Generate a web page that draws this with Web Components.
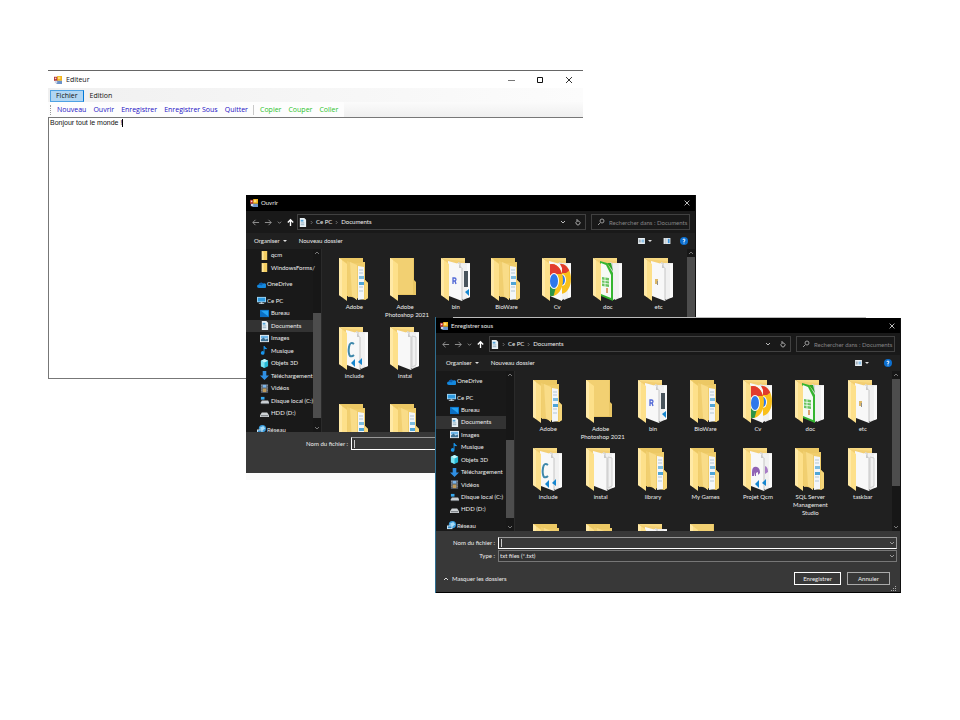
<!DOCTYPE html>
<html lang="fr">
<head>
<meta charset="utf-8">
<title>Editeur</title>
<style>
html, body { margin: 0; height: 100%; background: #fff; }
body { font: 6px/8px Lato, "Open Sans", sans-serif; }
</style>
</head>
<body>
<app-desktop></app-desktop>
<script>
const svg = (box, body, w, h) => `<svg viewBox="0 0 ${box}" width="${w}" height="${h}" aria-hidden="true">${body}</svg>`;
const stroke = (d, c = '#ddd', s = 1) => `<path d="${d}" fill="none" stroke="${c}" stroke-width="${s}"/>`;

const SMALL = {
  app: `<rect x="0" y="1" width="5" height="5" fill="#b02a2a"/><rect x="1" y="2" width="2" height="2" fill="#f3d5cf"/><rect x="4" y="0" width="6" height="6" fill="#f2b41c"/><rect x="5" y="1" width="3" height="3" fill="#ffdf77"/><rect x="3" y="6" width="7" height="4" fill="#6d93c9"/><rect x="1" y="6" width="3" height="3" fill="#cfd8e6"/>`,
  folder: `<path d="M2 0h6v10H2z" fill="#f5cf62"/><path d="M2 0l2 1v9H2z" fill="#ffe69a"/>`,
  cloud: `<path d="M2 9a2 2 0 0 1 0-4 3 3 0 0 1 5-1 2.500 2.500 0 0 1 2 5z" fill="#1487dc"/><path d="M2 5a3 3 0 0 1 5-1L5 6z" fill="#0a5cae"/>`,
  pc: `<rect x="0" y="1" width="10" height="6" fill="#9fd4f2"/><rect x="1" y="2" width="8" height="4" fill="#2e9ae0"/><path d="M4 7h2v1h2v1H2V8h2z" fill="#c7d3da"/>`,
  desk: `<rect x="0" y="1" width="10" height="8" fill="#0b6fc4"/><path d="M1 2h8v6z" fill="#25a3f3"/>`,
  doc: `<path d="M2 0h5l2 2v8H2z" fill="#e9f1f5"/><rect x="3" y="2" width="3" height="2" fill="#55a4d8"/><rect x="3" y="5" width="4" height="1" fill="#8aa9bb"/><rect x="3" y="7" width="4" height="1" fill="#8aa9bb"/>`,
  img: `<rect x="0" y="1" width="10" height="8" fill="#e8eef2"/><rect x="1" y="2" width="8" height="3" fill="#6cb5e8"/><path d="M1 8V6l3-2 2 2 3-1v3z" fill="#3a6f93"/>`,
  music: `<path d="M4 0h1q1 2 3 3-1 1-3 0v5a2 2 0 1 1-1-2z" fill="#1894ea"/>`,
  cube: `<path d="M5 0l4 2v6l-4 2-4-2V2z" fill="#26b9d6"/><path d="M1 2l4 2v6L1 8z" fill="#7ce3f0"/><path d="M5 0l4 2-4 2-4-2z" fill="#c4f5fa"/>`,
  down: `<path d="M3 0h4v5h3l-5 5-5-5h3z" fill="#2f8fe3"/>`,
  video: `<rect x="1" y="0" width="8" height="10" fill="#4b5461"/><rect x="3" y="1" width="4" height="3" fill="#7cb5ea"/><rect x="3" y="5" width="4" height="4" fill="#c09b59"/><path d="M2 1v8M8 1v8" stroke="#bbb" stroke-width="1" stroke-dasharray="1 1"/>`,
  disk: `<path d="M1 1h4v3H1z" fill="#36a8ee"/><path d="M2 5h7l1 2v2H1V7z" fill="#c9ced2"/><path d="M1 8h9v1H1z" fill="#6a6f73"/>`,
  hdd: `<path d="M2 4h6l2 3v2H0V7z" fill="#cfd3d6"/><path d="M1 7h8v1H1z" fill="#64696d"/>`,
  net: `<circle cx="6" cy="4" r="4" fill="#3b9ddd"/><path d="M3 3l4-2 2 3-3 2z" fill="#a7dcf7"/><rect x="0" y="5" width="6" height="4" fill="#cfe6f3"/><rect x="1" y="6" width="4" height="2" fill="#3488c4"/>`
};
const small = (k, s = 9) => svg('10 10', SMALL[k], s, s);

const BACK = '<path d="M0 0H24V4H26V22L29 25V40L26 42 8 38 0 36z" fill="#f0cd6b"/>';
const BACK_PLAIN = '<path d="M0 0H24V22L26 24V37H6L0 36z" fill="#e9c664"/><path d="M0 0H23V36H6z" fill="#f2d072"/>';
const FLAP = '<path d="M0 0L8 6V43L0 37z" fill="#fde08a"/><path d="M0 0L3 2V39L0 37z" fill="#ffe9a6"/>';
const LID = '<path d="M0 0H24V5H8z" fill="#f8d982"/>';
const PAPER = LID + '<path d="M0 1L24 3 24 36 0 36z" fill="#f3cf74"/><path d="M16 5H29V39L22 42z" fill="#ececec"/><path d="M17 4l8 3v31l-5 2z" fill="#dadada"/><path d="M20 5l6 2v32l-6 3z" fill="#f1f1f1"/><path d="M26 6h3v33l-3 1z" fill="#fafafa"/>';
const SHEET = '<path d="M7 3L18 6 21 10V43L8 38z" fill="#f8f8f8"/><path d="M18 6v4h3z" fill="#cacaca"/><path d="M21 10V43" stroke="#c6c6c6" stroke-width="1"/>';
const VS = '<path d="M12 36l4-4v8zM19 35l4-4v7z" fill="#1686cf"/>';
const FOLDERS = {
  docs: BACK + '<path d="M0 0H24V5H8z" fill="#ecc864"/><path d="M19 8l6 1V41l-6 1z" fill="#f3f6f8"/><path d="M20 12h4M20 15h4M20 29h4M20 33h4" stroke="#b3c7d5"/><path d="M20 18h5v3h-5z" fill="#7dbde0"/><path d="M20 24h5v3h-5z" fill="#4fa5d6"/><path d="M8 3l10 4v35l-5-4-4 1z" fill="#f1cf70"/><path d="M11 4l7 3v35l-5-4z" fill="#f9dc88"/><path d="M26 22l3 3v15l-3 2z" fill="#f6d679"/>' + FLAP,
  plain: BACK_PLAIN + FLAP,
  bin: PAPER + '<path d="M23 13h4v16h-4z" fill="#49545c"/><path d="M24 34l4-3v7z" fill="#1686cf"/>' + SHEET + '<path d="M12 26v-6h1.500a1.500 1.500 0 0 1 0 3H12m2 0l1 3" fill="none" stroke="#5269d6" stroke-width="1.300"/>' + FLAP,
  chrome: PAPER + '<clipPath id="b"><ellipse cx="19" cy="21" rx="10" ry="15"/></clipPath><g clip-path="url(#b)"><path d="M9 4h20v34H9z" fill="#f9c01b"/><path d="M9 4h17l2 8-4 3H9z" fill="#e13b2d"/><ellipse cx="20" cy="22" rx="4" ry="6" fill="#fff"/><ellipse cx="20" cy="22" rx="3" ry="5" fill="#2e78ea"/></g>' +
    '<path d="M7 3L18 6 20 10V43L8 38z" fill="#f8f8f8"/><clipPath id="a"><ellipse cx="10" cy="22" rx="11" ry="16"/></clipPath><g clip-path="url(#a)"><path d="M0 4h24v36H0z" fill="#fbc11a"/><path d="M0 4h16l4 12H12L8 20H0z" fill="#e23c2e"/><path d="M0 26h8l6 3-3 11H0z" fill="#2c9448"/><ellipse cx="12" cy="23" rx="5" ry="8" fill="#fff"/><ellipse cx="12" cy="23" rx="4" ry="7" fill="#2e78ea"/></g>' + FLAP,
  calc: PAPER + '<path d="M7 3L14 5 20 15V43L8 38z" fill="#35b530"/><path d="M8 5l5 2 5 10V40l-10-4z" fill="#f6faf5"/><path d="M14 5h4l2 8z" fill="#2aa527"/><path d="M9 19l7 1v9l-7-1z" fill="#69c462"/><path d="M9 22l7 1M9 25l7 1M12 19v10" stroke="#e3f6e0"/><path d="M13 35v-5h2v5z" fill="#dba16f"/>' + FLAP,
  etc: PAPER + SHEET + '<path d="M11 21h3v5h-3z" fill="#dcb868"/><path d="M13 23h1v4h-1z" fill="#8d8d8d"/>' + FLAP,
  include: PAPER + SHEET + '<path d="M15 17q-4-3-5 3t1 9q2 1 4-1" fill="none" stroke="#3f88ab" stroke-width="2"/>' + VS + FLAP,
  blank: PAPER + '<path d="M22 9l4 1v28l-4 2z" fill="none" stroke="#cfcfcf"/>' + SHEET + FLAP,
  qcm: PAPER + SHEET + '<path d="M9 24q0-6 5-5 3 1 3 6l-2 2v-3l-2 1v3h-1v-4l-1 4h-2z" fill="#9062b4"/><path d="M22 18q3 1 3 6l-3 2z" fill="#a77bc6"/>' + VS + FLAP
};

const define = (name, css, html) => {
  const t = document.createElement('template');
  customElements.define(name, class extends HTMLElement {
    connectedCallback() {
      if (this.shadowRoot) return;
      t.innerHTML = `<style>*{box-sizing:border-box}button,input,select,textarea{font:inherit;color:inherit;background:none;border:0;padding:0;margin:0;border-radius:0;outline:0}svg{display:block;flex:none}${css}</style>${typeof html === 'function' ? html(this) : html}`;
      this.attachShadow({ mode: 'open' }).append(t.content.cloneNode(true));
    }
  });
};

define('title-bar', `
  :host{display:flex;align-items:center;height:var(--title-height,16px);padding:0 3px 0 4px;background:var(--title-bg,#000);gap:3px}
  .t{flex:1} .b{display:flex;gap:19px} button{width:10px;height:10px;display:grid;place-items:center}`,
  el => `${small('app', 8)}<span class="t"><slot></slot></span><div class="b">${el.hasAttribute('full') ?
    `<button aria-label="Réduire">${svg('10 10', stroke('M2 5.500h7', '#777'), 10, 10)}</button><button aria-label="Agrandir">${svg('10 10', stroke('M2.500 2.500h5v5h-5z', '#111'), 10, 10)}</button>` : ''}
    <button aria-label="Fermer">${svg('10 10', stroke('M2 2l6 6M8 2L2 8', el.hasAttribute('full') ? '#333' : '#eee'), el.hasAttribute('full') ? 10 : 8, el.hasAttribute('full') ? 10 : 8)}</button></div>`);

define('editor-window', `
  :host{display:flex;flex-direction:column;background:#fff;border-top:1px solid #666;color:#111;font:7px/10px "Open Sans",sans-serif;--title-bg:#fff;--title-height:17px}
  title-bar{padding:0 9px 0 6px;gap:4px}
  nav{display:flex;height:14px;background:linear-gradient(90deg,#f0f0f0,#fcfcfc);padding:1px 2px 0;align-items:center;gap:0}
  nav button{height:12px;padding:0 5px;border:1px solid transparent}
  nav .on{background:#b1d6f3;border-color:#4ea2e4 #0078d7 #4ea2e4 #4ea2e4}
  .tools{display:flex;height:15px;background:linear-gradient(#fbfbfb,#efefef)}
  .in{display:flex;align-items:center;background:#fdfdfd;padding:0 3px 0 2px;color:#1c10c4;gap:1px}
  .in button{padding:0 3px;white-space:nowrap}
  .grip{width:1px;height:10px;border-left:1px dotted #999;margin-right:2px}
  .sep{width:1px;height:10px;background:#c9c9c9;margin:0 2px 0 1px}
  .g{color:#2cc32c}
  .page{position:relative;border:1px solid #777;border-right:0}
  textarea{display:block;width:100%;height:260px;resize:none;padding:1px;font:7px/8px "Liberation Sans",sans-serif;overflow:hidden}
  .caret{position:absolute;left:73px;top:1px;width:1px;height:8px;background:#000}`,
  `<title-bar full>Editeur</title-bar>
   <nav><button class="on">Fichier</button><button>Edition</button></nav>
   <div class="tools"><div class="in"><span class="grip"></span><button>Nouveau</button><button>Ouvrir</button><button>Enregistrer</button><button>Enregistrer Sous</button><button>Quitter</button><span class="sep"></span><button class="g">Copier</button><button class="g">Couper</button><button class="g">Coller</button></div></div>
   <div class="page"><textarea aria-label="Texte" spellcheck="false">Bonjour tout le monde !</textarea><span class="caret"></span></div>`);

define('address-row', `
  :host{display:flex;align-items:center;height:22px;padding:0 5px;background:#191919;color:#eee}
  .nav{display:flex;align-items:center;justify-content:space-between;width:44px;margin-right:var(--nav-gap,2px)}
  .nav button{display:grid;place-items:center}
  .bar{flex:1;display:flex;align-items:center;height:16px;border:1px solid #414141;padding:0 1px 0 0;gap:3px}
  .bar a{color:inherit;text-decoration:none}
  .sp{flex:1} .bar button{display:grid;place-items:center;width:12px;height:10px}
  label{display:flex;align-items:center;width:99px;height:16px;border:1px solid #414141;margin-left:5px;padding-left:5px;gap:4px;color:#888}
  input{flex:1;min-width:0;height:10px} input::placeholder{color:#858585;opacity:1}`,
  `<div class="nav">
    <button aria-label="Précédent">${svg('10 10', stroke('M9 5H2M5 2L2 5l3 3', '#999'), 9, 9)}</button>
    <button aria-label="Suivant">${svg('10 10', stroke('M1 5h7M5 2l3 3-3 3', '#999'), 9, 9)}</button>
    <button aria-label="Récents">${svg('6 6', stroke('M1 2l2 2 2-2', '#999'), 5, 5)}</button>
    <button aria-label="Remonter">${svg('10 10', stroke('M5 9V2M2 5l3-3 3 3', '#fff', 1.500), 9, 9)}</button></div>
   <div class="bar">${small('doc')}${svg('4 6', stroke('M1 1l2 2-2 2', '#888'), 3, 5)}<a href="#">Ce PC</a>${svg('4 6', stroke('M1 1l2 2-2 2', '#888'), 3, 5)}<a href="#">Documents</a><span class="sp"></span>
    <button aria-label="Dérouler">${svg('8 8', stroke('M2 3l2 2 2-2', '#bbb'), 8, 8)}</button>
    <button aria-label="Actualiser">${svg('8 8', stroke('M3 3.200a2 2 0 1 0 2 0M3 1v2h2', '#aaa'), 8, 8)}</button></div>
   <label>${svg('8 8', '<circle cx="5" cy="3" r="2" fill="none" stroke="#999"/>' + stroke('M3 5L1 7', '#999'), 8, 8)}<input type="text" placeholder="Rechercher dans : Documents" aria-label="Rechercher"></label>`);

define('command-row', `
  :host{display:flex;align-items:center;height:16px;background:#202020;padding:0 8px;color:#eee}
  :host([preview]){padding:0 7px 0 8px} :host(:not([preview])){padding-left:10px}
  button{display:flex;align-items:center;gap:3px} .n{margin-left:12px;flex:1} .r{margin-left:11px} .help{margin-left:15px}
  :host([preview]) .help{margin-left:9px}`,
  el => `<button>Organiser ${svg('4 3', '<path d="M0 0h4L2 2z" fill="#ddd"/>', 4, 3)}</button><button class="n">Nouveau dossier</button>
   <button aria-label="Affichage">${svg('8 7', '<rect width="8" height="7" fill="#e8eef2"/><path d="M1 2h2v1H1zM1 4h2v1H1z" fill="#567"/><path d="M4 2h3v1H4zM4 4h3v1H4z" fill="#2f8fd6"/>', 7, 6)}${svg('4 3', '<path d="M0 0h4L2 2z" fill="#ddd"/>', 4, 3)}</button>
   ${el.hasAttribute('preview') ? `<button class="r" aria-label="Volet">${svg('8 7', '<rect width="8" height="7" fill="#dfe6ea"/><rect x="5" y="1" width="2" height="5" fill="#3a94dc"/><path d="M2.500 0v7" stroke="#bcc5cc"/>', 8, 6)}</button>` : ''}
   <button class="help" aria-label="Aide">${svg('8 8', '<circle cx="4" cy="4" r="4" fill="#0b6fd0"/>' + stroke('M3 3q0-1 1-1t1 1-1 1v1M4 5.500v1', '#fff'), 8, 8)}</button>`);

define('side-item', `
  :host{display:flex;flex:1;min-height:0}
  button{position:relative;flex:1;min-width:0;display:flex;align-items:center;gap:2px;padding-left:14px;white-space:nowrap;color:#eee}
  :host([top]) button{padding-left:11px;gap:1px} :host([on]) button{background:#333}`,
  el => `<button>${small(el.getAttribute('icon'))}<slot></slot></button>`);

define('scroll-rail', `
  :host{display:flex;flex-direction:column;background:#171717;justify-content:space-between;align-items:center}
  span{flex:1;width:100%;display:flex;flex-direction:column}
  i{background:#4d4d4d}`,
  el => { const [a, h, b] = el.getAttribute('thumb').split(' ');
    return `${svg('8 8', stroke('M2 5l2-2 2 2', '#777'), 8, 8)}<span><b style="flex:${a}"></b><i style="flex:${h}"></i><b style="flex:${b}"></b></span>${svg('8 8', stroke('M2 3l2 2 2-2', '#777'), 8, 8)}`; });

define('folder-tile', `
  :host{display:flex;flex-direction:column;align-items:center;text-align:center;color:#eee}
  svg{margin-bottom:1px} span{width:40px;min-height:8px}`,
  el => `${svg('30 44', FOLDERS[el.getAttribute('kind')], 30, 44)}<span><slot></slot></span>`);

const SIDE = [['folder', 'qcm'], ['folder', 'WindowsForms/'], 0, ['cloud', 'OneDrive', 'top'], 0, ['pc', 'Ce PC', 'top'], ['desk', 'Bureau'], ['doc', 'Documents', 'on'], ['img', 'Images'], ['music', 'Musique'], ['cube', 'Objets 3D'], ['down', 'Téléchargement'], ['video', 'Vidéos'], ['disk', 'Disque local (C:)'], ['hdd', 'HDD (D:)'], 0, ['net', 'Réseau', 'top']];
const TILES = [['docs', 'Adobe'], ['plain', 'Adobe Photoshop&nbsp;2021'], ['bin', 'bin'], ['docs', 'BioWare'], ['chrome', 'Cv'], ['calc', 'doc'], ['etc', 'etc'], ['include', 'include'], ['blank', 'instal'], ['docs', 'library'], ['docs', 'My Games'], ['qcm', 'Projet Qcm'], ['docs', 'SQL Server Management Studio'], ['blank', 'taskbar'], ['docs', ''], ['docs', ''], ['blank', ''], ['plain', '']];

define('file-dialog', `
  :host{display:flex;flex-direction:column;background:#191919;color:#eee;border-right:1px solid #111}
  .body{display:flex;height:var(--body);overflow:hidden}
  .side{width:var(--side);display:flex;background:#191919}
  .list{flex:1;min-width:0;display:flex;flex-direction:column;height:var(--list);margin-top:var(--list-top)}
  .gap{height:4px;flex:none}
  scroll-rail{width:8px;flex:none}
  .files{flex:1;min-width:0;background:#202020;border-left:1px solid #2a2a2a;display:grid;grid-template-columns:repeat(7,1fr);align-content:start;row-gap:var(--row-gap);padding:9px 3px 0 7px;overflow:hidden}`,
  el => {
    const open = el.hasAttribute('preview');
    return `<title-bar>${el.getAttribute('heading')}</title-bar><address-row></address-row><command-row ${open ? 'preview' : ''}></command-row>
    <div class="body"><div class="side"><div class="list">${SIDE.slice(open ? 0 : 3).map(s => s ? `<side-item icon="${s[0]}" ${s[2] || ''}>${s[1]}</side-item>` : '<div class="gap"></div>').join('')}</div><scroll-rail thumb="${el.getAttribute('side-thumb')}"></scroll-rail></div>
    <div class="files">${TILES.map(([k, n]) => `<folder-tile kind="${k}">${n}</folder-tile>`).join('')}</div><scroll-rail thumb="${el.getAttribute('thumb')}"></scroll-rail></div><slot></slot>`;
  });

const CHEV = svg('8 8', stroke('M2 3l2 2 2-2', '#999'), 8, 8);
define('file-form', `
  :host{display:block;background:#383838;padding:var(--form-pad,6px 3px 0 0)}
  .row{display:grid;grid-template-columns:var(--label) 1fr;align-items:center;column-gap:3px;margin-bottom:1px}
  label{text-align:right}
  .f{display:grid;grid-template-columns:1fr 8px;align-items:center;height:var(--field,12px);border:1px solid #777;background:#333}
  .f.on{border-color:#999 #999 #fff #fff;background:#383838}
  input,select{grid-area:1/1/2/3;width:100%;height:9px;padding:0 1px;appearance:none}
  .f button,.f i{grid-area:1/2} .f i{pointer-events:none}
  .caret{grid-area:1/1;width:1px;height:8px;margin-left:2px;background:#ccc}
  .foot{display:flex;align-items:center;gap:6px;padding:9px 7px 2px 7px}
  .foot button{height:13px;width:43px;border:1px solid #aaa;text-align:center}
  .foot .fold{width:auto;border:0;display:flex;align-items:center;gap:3px;margin-right:auto}
  .foot .main{width:47px;border-color:#fff}
  .end{height:var(--end,0px);display:flex;justify-content:flex-end;align-items:flex-end}`,
  el => `<div class="row"><label for="n">Nom du fichier :</label><div class="f on"><input id="n" type="text"><span class="caret"></span><button aria-label="Noms récents">${CHEV}</button></div></div>` +
    (el.hasAttribute('save') ? `<div class="row"><label for="t">Type :</label><div class="f"><select id="t"><option>txt files (*.txt)</option></select><i>${CHEV}</i></div></div>
    <div class="foot"><button class="fold">${svg('6 6', stroke('M1 4l2-2 2 2', '#ddd'), 6, 6)}Masquer les dossiers</button><button class="main">Enregistrer</button><button>Annuler</button></div>` : '') +
    `<div class="end">${el.hasAttribute('save') ? svg('6 6', '<path d="M4 0h1v1H4zM2 2h1v1H2zM4 2h1v1H4zM0 4h1v1H0zM2 4h1v1H2zM4 4h1v1H4z" fill="#aaa"/>', 6, 6) : ''}</div>`);

define('app-desktop', `
  :host{display:block;position:relative;min-height:100vh;overflow:hidden}
  editor-window,file-dialog,.under,.behind{position:absolute}
  editor-window{left:48px;right:377px;top:70px}
  .one{left:246px;right:264px;top:195px;--body:183px;--side:75px;--list:187px;--list-top:0px;--row-gap:8px;--label:102px;--field:13px;--form-pad:5px 3px 0 0;--end:22px}
  .under{left:246px;right:524px;top:473px;height:7px;background:#fafafa}
  .behind{left:435px;right:94px;top:317px;height:276px;border-left:1px solid #2f6f91;background:linear-gradient(90deg,#202020 0 17px,#bbb 17px)}
  .two{left:436px;right:59px;top:318px;--title-height:15px;--body:160px;--side:78px;--list:157px;--list-top:4px;--row-gap:7px;--label:59px;--end:5px;--nav-gap:4px;border-bottom:1px solid #000}`,
  `<editor-window></editor-window>
   <file-dialog class="one" preview heading="Ouvrir" side-thumb="56 105 6" thumb="0 130 37"><file-form></file-form></file-dialog>
   <div class="under"></div><div class="behind"></div>
   <file-dialog class="two" heading="Enregistrer sous" side-thumb="61 78 5" thumb="0 107 37"><file-form save></file-form></file-dialog>`);
</script>
</body>
</html>
